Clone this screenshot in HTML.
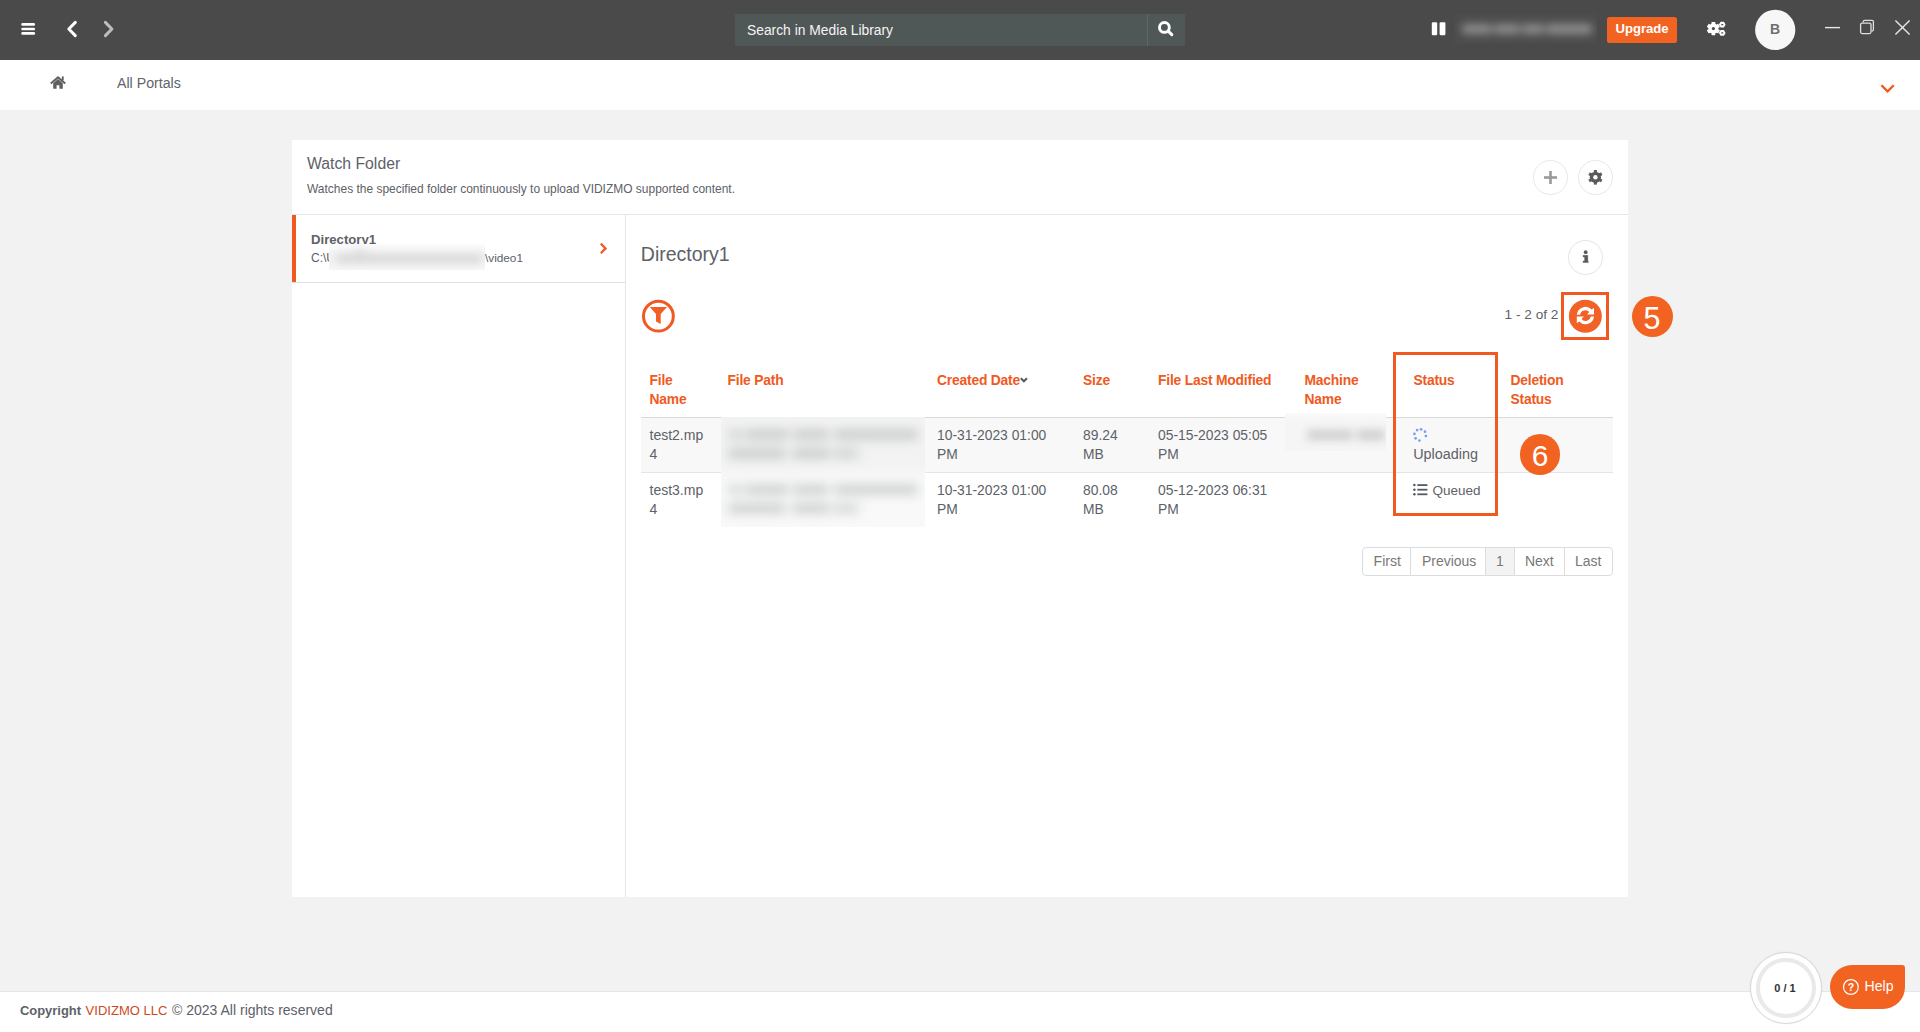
<!DOCTYPE html>
<html><head><meta charset="utf-8">
<style>
*{box-sizing:border-box;margin:0;padding:0}
html,body{width:1920px;height:1032px;overflow:hidden;background:#f2f2f2;font-family:"Liberation Sans",sans-serif;color:#5d6168}
.a{position:absolute;white-space:nowrap}
#top{position:absolute;left:0;top:0;width:1920px;height:60px;background:#4a4a4a}
#crumb{position:absolute;left:0;top:60px;width:1920px;height:50px;background:#fff}
#card{position:absolute;left:292px;top:140px;width:1336px;height:757px;background:#fff}
#footer{position:absolute;left:0;top:991px;width:1920px;height:41px;background:#fff;border-top:1px solid #e3e7ea}
.hdr{color:#f05a22;font-weight:700;font-size:13.85px;line-height:19.1px;letter-spacing:-0.2px}
.cell{color:#5d6168;font-size:14px;line-height:19px}
.blur{filter:blur(3px)}
.bar{position:absolute;background:#c8c8c8;border-radius:3px}
</style></head><body>
<div id="top">
<svg class="a" style="left:0;top:0" width="130" height="60" viewBox="0 0 130 60">
 <g stroke="#fff" stroke-width="2.6" stroke-linecap="round"><line x1="22.6" y1="24.4" x2="33.8" y2="24.4"/><line x1="22.6" y1="29" x2="33.8" y2="29"/><line x1="22.6" y1="33.4" x2="33.8" y2="33.4"/></g>
 <polyline points="75.3,22.4 68.8,29 75.3,35.6" fill="none" stroke="#fff" stroke-width="3" stroke-linecap="round" stroke-linejoin="round"/>
 <polyline points="105.4,22.4 111.9,29 105.4,35.6" fill="none" stroke="#bdbdbd" stroke-width="3" stroke-linecap="round" stroke-linejoin="round"/>
</svg>
<div class="a" style="left:735px;top:14px;width:450px;height:32px;background:#505857"></div>
<div class="a" style="left:1147px;top:14px;width:1px;height:32px;background:#5b6866"></div>
<div class="a" style="left:747px;top:20px;font-size:13.83px;line-height:20px;color:#f4f4f4">Search in Media Library</div>
<svg class="a" style="left:1150px;top:14px" width="35" height="32" viewBox="1150 14 35 32">
 <circle cx="1164.4" cy="27.4" r="4.9" fill="none" stroke="#fff" stroke-width="2.9"/>
 <line x1="1168.2" y1="31.2" x2="1171.8" y2="34.6" stroke="#fff" stroke-width="3" stroke-linecap="round"/>
</svg>
<svg class="a" style="left:1420px;top:0" width="500" height="60" viewBox="1420 0 500 60">
 <rect x="1431.8" y="22.2" width="5.4" height="13.1" rx="1.2" fill="#fff"/>
 <rect x="1439.6" y="22.2" width="5.8" height="13.1" rx="1.2" fill="#fff"/>
 <g transform="translate(1713.4,28.6)" fill="#fff">
  <circle r="5"/>
  <rect x="-1.9" y="-6.6" width="3.8" height="13.2" rx="0.6"/>
  <rect x="-1.9" y="-6.6" width="3.8" height="13.2" rx="0.6" transform="rotate(60)"/>
  <rect x="-1.9" y="-6.6" width="3.8" height="13.2" rx="0.6" transform="rotate(120)"/>
  <circle r="1.6" fill="#4a4a4a"/>
 </g>
 <g fill="#fff">
  <polygon points="1725.6,24.6 1723.9,27.5 1720.6,27.5 1718.9,24.6 1720.6,21.7 1723.9,21.7"/>
  <polygon points="1725.6,32.9 1723.9,35.8 1720.6,35.8 1718.9,32.9 1720.6,30 1723.9,30"/>
 </g>
 <g fill="#4a4a4a"><rect x="1721.2" y="24" width="2.2" height="1.3" rx="0.6"/><rect x="1721.2" y="32.3" width="2.2" height="1.3" rx="0.6"/></g>
 <circle cx="1775.2" cy="29.9" r="20.1" fill="#f7f7f7"/>
 <line x1="1825" y1="27.6" x2="1840" y2="27.6" stroke="#e6e6e6" stroke-width="1.4"/>
 <rect x="1860.6" y="23.2" width="10.4" height="10.4" rx="1.5" fill="none" stroke="#dedede" stroke-width="1.3"/>
 <path d="M1863.2,22.6 V21.5 a1.4,1.4 0 0 1 1.4,-1.2 H1872 a1.4,1.4 0 0 1 1.4,1.4 V29.6 a1.4,1.4 0 0 1 -1.4,1.4 H1871.6" fill="none" stroke="#dedede" stroke-width="1.3"/>
 <g stroke="#e8e8e8" stroke-width="1.4"><line x1="1895.4" y1="20.4" x2="1909.6" y2="34.4"/><line x1="1909.6" y1="20.4" x2="1895.4" y2="34.4"/></g>
</svg>
<div class="a" style="left:1454px;top:12.5px;width:143px;height:31px;background:#4c4c4c;overflow:hidden">
 <div class="a" style="left:-12px;top:-12px;width:167px;height:55px;filter:blur(4.5px)">
  <div class="a" style="left:0;top:0;width:167px;height:55px;background:#4c4c4c"></div>
  <div class="bar" style="left:20px;top:23.5px;width:30px;height:10px;background:#8c8c8c"></div>
  <div class="bar" style="left:52px;top:23.5px;width:26px;height:10px;background:#8c8c8c"></div>
  <div class="bar" style="left:80px;top:23.5px;width:22px;height:10px;background:#8c8c8c"></div>
  <div class="bar" style="left:104px;top:23.5px;width:46px;height:10px;background:#8e8e8e"></div>
 </div>
</div>
<div class="a" style="left:1607px;top:17px;width:70px;height:26px;background:#f26322;border-radius:2.5px"></div>
<div class="a" style="left:1607px;top:17.1px;width:70px;text-align:center;font-size:13.1px;font-weight:700;line-height:24px;color:#fff">Upgrade</div>
<div class="a" style="left:1755px;top:19.2px;width:40px;text-align:center;font-size:14px;font-weight:700;line-height:20px;color:#6e6e6e">B</div>
</div>
<div id="crumb">
<svg class="a" style="left:48px;top:14px" width="20" height="16" viewBox="48 74 20 16">
 <path d="M53.2,83.2 L58,79 L62.8,83.2 V88.8 H59.4 V85.2 H56.6 V88.8 H53.2 Z" fill="#5f5f5f"/>
 <polyline points="50.8,83.4 58,77.2 65.2,83.4" fill="none" stroke="#5f5f5f" stroke-width="2"/>
 <rect x="61.8" y="76.4" width="1.9" height="4" fill="#5f5f5f"/>
</svg>
<div class="a" style="left:117px;top:13px;font-size:14.18px;line-height:20px;color:#60646b">All Portals</div>
<svg class="a" style="left:1876px;top:20px" width="24" height="16" viewBox="1876 80 24 16">
 <polyline points="1881.4,85.2 1887.6,91.4 1893.8,85.2" fill="none" stroke="#f05a1a" stroke-width="2.3"/>
</svg>
</div>
<div id="card"></div>
<div class="a" style="left:307px;top:153.5px;font-size:15.77px;line-height:20px;color:#5d6168">Watch Folder</div>
<div class="a" style="left:307px;top:181.1px;font-size:11.97px;line-height:16px;color:#5d6168">Watches the specified folder continuously to upload VIDIZMO supported content.</div>
<div class="a" style="left:1533.2px;top:160.2px;width:34.6px;height:34.6px;border:1px solid #e6e8ea;border-radius:50%"></div>
<div class="a" style="left:1578px;top:160.2px;width:34.6px;height:34.6px;border:1px solid #e6e8ea;border-radius:50%"></div>
<svg class="a" style="left:1540px;top:165px" width="80" height="25" viewBox="1540 165 80 25">
 <g stroke="#9a9a9a" stroke-width="2.6"><line x1="1550.5" y1="171" x2="1550.5" y2="184"/><line x1="1544" y1="177.5" x2="1557" y2="177.5"/></g>
 <g transform="translate(1595.4,177.3)" fill="#5c5c5c">
  <circle r="5.6"/>
  <rect x="-1.5" y="-7.3" width="3" height="14.6"/>
  <rect x="-1.5" y="-7.3" width="3" height="14.6" transform="rotate(60)"/>
  <rect x="-1.5" y="-7.3" width="3" height="14.6" transform="rotate(120)"/>
  <circle r="2.2" fill="#fff"/>
 </g>
</svg>
<div class="a" style="left:292px;top:214px;width:1336px;height:1px;background:#e3e7ea"></div>
<div class="a" style="left:625px;top:215px;width:1px;height:682px;background:#e3e7ea"></div>
<div class="a" style="left:292px;top:282px;width:333px;height:1px;background:#dde3e8"></div>
<div class="a" style="left:292px;top:215px;width:4px;height:67px;background:#f05a22"></div>
<div class="a" style="left:311px;top:230.8px;font-size:13.17px;font-weight:700;line-height:18px;color:#5d6168">Directory1</div>
<div class="a" style="left:311px;top:249.8px;font-size:12px;line-height:16px;color:#5d6168">C:\U</div>
<div class="a" style="left:329px;top:244px;width:156px;height:26px;background:#f3f3f3;overflow:hidden">
 <div class="a" style="left:-12px;top:-12px;width:180px;height:50px;filter:blur(4px)">
  <div class="a" style="left:0;top:0;width:180px;height:16px;background:#fdfdfd"></div>
  <div class="a" style="left:0;top:36px;width:180px;height:14px;background:#f8f8f8"></div>
  <div class="bar" style="left:19px;top:22px;width:146px;height:9px;background:#d8d8d8"></div>
  <div class="bar" style="left:36px;top:16px;width:14px;height:6px;background:#e2e2e2"></div>
 </div>
</div>
<div class="a" style="left:485px;top:249.8px;font-size:11.78px;line-height:16px;color:#5d6168">\video1</div>
<svg class="a" style="left:596px;top:240px" width="14" height="16" viewBox="596 240 14 16">
 <polyline points="600.8,243.6 605.6,248.4 600.8,253.2" fill="none" stroke="#f05a22" stroke-width="2.2"/>
</svg>

<div class="a" style="left:640.8px;top:241.6px;font-size:19.5px;line-height:24px;color:#5d6168">Directory1</div>
<div class="a" style="left:1568px;top:240px;width:35px;height:35px;border:1px solid #e3e5e8;border-radius:50%"></div>
<svg class="a" style="left:1578px;top:246px" width="16" height="20" viewBox="1578 246 16 20">
 <circle cx="1585.7" cy="252.2" r="1.9" fill="#555a60"/>
 <path d="M1583.1,255.3 H1587.8 V260.9 H1588.2 V262.6 H1583.1 V260.9 H1584.6 V257 H1583.1 Z" fill="#555a60" stroke="#555a60" stroke-width="0.4" stroke-linejoin="round"/>
</svg>
<svg class="a" style="left:638px;top:296px" width="42" height="42" viewBox="638 296 42 42">
 <circle cx="658.4" cy="316.2" r="14.9" fill="none" stroke="#f05a22" stroke-width="3"/>
 <path d="M649.8,307 H667 L660.7,314 V323.9 L656,321.5 V314 Z" fill="#f15f24"/>
</svg>
<div class="a" style="left:1504.6px;top:306.1px;font-size:13.65px;line-height:18px;color:#5d6168">1 - 2 of 2</div>
<div class="a" style="left:1561px;top:292px;width:48px;height:48px;border:3px solid #f05a22"></div>
<svg class="a" style="left:1566px;top:297px" width="40" height="40" viewBox="1566 297 40 40">
 <circle cx="1585.35" cy="316.25" r="16.45" fill="#f26125"/>
 <g transform="translate(1585.4,315.6)" fill="#fff">
  <path id="rhalf" d="M-8.6,-0.9 A8.6,8.6 0 0 1 6.2,-6 L8.6,-7.6 V-1 H1.6 L3.9,-3.5 A5.3,5.3 0 0 0 -5.3,-0.9 Z"/>
  <path d="M-8.6,-0.9 A8.6,8.6 0 0 1 6.2,-6 L8.6,-7.6 V-1 H1.6 L3.9,-3.5 A5.3,5.3 0 0 0 -5.3,-0.9 Z" transform="rotate(180)"/>
 </g>
</svg>
<div class="a" style="left:1631.5px;top:295.8px;width:41px;height:41px;border-radius:50%;background:#f26322"></div>
<div class="a" style="left:1631.5px;top:300.6px;width:41px;text-align:center;font-size:30.5px;line-height:34px;color:#fff">5</div>


<div class="a hdr" style="left:649.5px;top:370.5px">File<br>Name</div>
<div class="a hdr" style="left:727.5px;top:370.5px">File Path</div>
<div class="a hdr" style="left:937px;top:370.5px">Created Date</div>
<svg class="a" style="left:1017px;top:374px" width="12" height="10" viewBox="1017 374 12 10">
 <polyline points="1020.8,378.2 1023.9,381.3 1027,378.2" fill="none" stroke="#555a60" stroke-width="2"/>
</svg>
<div class="a hdr" style="left:1083px;top:370.5px">Size</div>
<div class="a hdr" style="left:1158px;top:370.5px">File Last Modified</div>
<div class="a hdr" style="left:1304.5px;top:370.5px">Machine<br>Name</div>
<div class="a hdr" style="left:1413.5px;top:370.5px">Status</div>
<div class="a hdr" style="left:1510.5px;top:370.5px">Deletion<br>Status</div>
<div class="a" style="left:641px;top:417px;width:972px;height:1px;background:#d9d9d9"></div>
<div class="a" style="left:641px;top:418px;width:972px;height:54px;background:#f8f8f8"></div>
<div class="a" style="left:641px;top:472px;width:972px;height:1px;background:#e3e6e8"></div>

<div class="a cell" style="left:649.5px;top:425.6px">test2.mp<br>4</div>
<div class="a cell" style="left:937px;top:425.6px;font-size:13.85px">10-31-2023 01:00<br>PM</div>
<div class="a cell" style="left:1083px;top:425.6px;font-size:13.85px">89.24<br>MB</div>
<div class="a cell" style="left:1158px;top:425.6px;font-size:13.85px">05-15-2023 05:05<br>PM</div>
<div class="a cell" style="left:1413.2px;top:444.9px;font-size:14.39px">Uploading</div>

<div class="a cell" style="left:649.5px;top:481.1px">test3.mp<br>4</div>
<div class="a cell" style="left:937px;top:481.1px;font-size:13.85px">10-31-2023 01:00<br>PM</div>
<div class="a cell" style="left:1083px;top:481.1px;font-size:13.85px">80.08<br>MB</div>
<div class="a cell" style="left:1158px;top:481.1px;font-size:13.85px">05-12-2023 06:31<br>PM</div>
<div class="a cell" style="left:1432.5px;top:481.1px;font-size:13.49px">Queued</div>

<div class="a" style="left:721px;top:417px;width:204px;height:110px;background:#f9f9f9;overflow:hidden">
 <div class="a" style="left:-12px;top:-12px;width:228px;height:134px;filter:blur(5.5px)">
  <div class="a" style="left:0;top:0;width:228px;height:67px;background:#f2f2f2"></div>
  <div class="bar" style="left:19px;top:24px;width:14px;height:11px;background:#d4d7d7"></div>
  <div class="bar" style="left:36px;top:24px;width:44px;height:11px;background:#cccfcf"></div>
  <div class="bar" style="left:84px;top:24px;width:36px;height:11px;background:#cccfcf"></div>
  <div class="bar" style="left:125px;top:24px;width:84px;height:11px;background:#cccfcf"></div>
  <div class="bar" style="left:19px;top:43px;width:58px;height:11px;background:#cccfcf"></div>
  <div class="bar" style="left:83px;top:43px;width:38px;height:11px;background:#cccfcf"></div>
  <div class="bar" style="left:124px;top:43px;width:26px;height:11px;background:#d4d7d7"></div>
  <div class="bar" style="left:19px;top:79px;width:14px;height:11px;background:#d8dbdb"></div>
  <div class="bar" style="left:36px;top:79px;width:44px;height:11px;background:#d0d3d3"></div>
  <div class="bar" style="left:84px;top:79px;width:36px;height:11px;background:#d0d3d3"></div>
  <div class="bar" style="left:125px;top:79px;width:84px;height:11px;background:#d0d3d3"></div>
  <div class="bar" style="left:19px;top:98px;width:58px;height:11px;background:#d0d3d3"></div>
  <div class="bar" style="left:83px;top:98px;width:38px;height:11px;background:#d0d3d3"></div>
  <div class="bar" style="left:124px;top:98px;width:26px;height:11px;background:#d8dbdb"></div>
 </div>
</div>
<div class="a" style="left:1285px;top:413px;width:101px;height:38px;background:#f5f5f5;overflow:hidden">
 <div class="a" style="left:-12px;top:-12px;width:125px;height:62px;filter:blur(4.5px)">
  <div class="a" style="left:0;top:0;width:125px;height:16px;background:#fbfbfb"></div>
  <div class="bar" style="left:34px;top:29px;width:46px;height:10px;background:#cfcfcf"></div>
  <div class="bar" style="left:84px;top:29px;width:28px;height:10px;background:#cdcdcd"></div>
 </div>
</div>
<svg class="a" style="left:1410px;top:425px" width="20" height="20" viewBox="1410 425 20 20">
 <g fill="#7b9cf5"><circle cx="1421.1" cy="429.3" r="1.35"/><circle cx="1417.1" cy="430.1" r="1.35"/><circle cx="1425.0" cy="431.7" r="1.35"/><circle cx="1414.4" cy="433.9" r="1.35"/><circle cx="1425.9" cy="436.0" r="1.35"/><circle cx="1415.6" cy="438.3" r="1.35"/><circle cx="1419.4" cy="440.5" r="1.35"/></g>
</svg>
<svg class="a" style="left:1410px;top:480px" width="22" height="20" viewBox="1410 480 22 20">
 <g fill="#555a60">
  <circle cx="1414.4" cy="485.1" r="1.25"/><circle cx="1414.4" cy="489.7" r="1.25"/><circle cx="1414.4" cy="494.2" r="1.25"/>
  <rect x="1417.3" y="484.2" width="10.1" height="1.8"/><rect x="1417.3" y="488.8" width="10.1" height="1.8"/><rect x="1417.3" y="493.4" width="10.1" height="1.8"/>
 </g>
</svg>
<div class="a" style="left:1393px;top:352px;width:105px;height:164px;border:3px solid #f05a22"></div>
<div class="a" style="left:1519.6px;top:433.9px;width:40.8px;height:40.8px;border-radius:50%;background:#f26322"></div>
<div class="a" style="left:1519.6px;top:438.7px;width:40.8px;text-align:center;font-size:30px;line-height:34px;color:#fff">6</div>

<div class="a" style="left:1362px;top:547px;width:251px;height:29px;border:1px solid #dcdcdc;border-radius:4px;overflow:hidden">
 <div class="a" style="left:46.7px;top:0;width:1px;height:27px;background:#dcdcdc"></div>
 <div class="a" style="left:121.5px;top:0;width:1px;height:27px;background:#dcdcdc"></div>
 <div class="a" style="left:122.5px;top:0;width:28.2px;height:27px;background:#f3f3f3"></div>
 <div class="a" style="left:150.7px;top:0;width:1px;height:27px;background:#dcdcdc"></div>
 <div class="a" style="left:200.7px;top:0;width:1px;height:27px;background:#dcdcdc"></div>
</div>
<div class="a" style="left:1373.5px;top:551.8px;font-size:14.15px;line-height:19px;color:#787878">First</div>
<div class="a" style="left:1422px;top:551.8px;font-size:13.97px;line-height:19px;color:#787878">Previous</div>
<div class="a" style="left:1485px;top:551.8px;width:30px;text-align:center;font-size:13.97px;line-height:19px;color:#787878">1</div>
<div class="a" style="left:1525px;top:551.8px;font-size:13.97px;line-height:19px;color:#787878">Next</div>
<div class="a" style="left:1575px;top:551.8px;font-size:13.97px;line-height:19px;color:#787878">Last</div>
<div id="footer"></div>
<div class="a" style="left:20px;top:1001.4px;font-size:12.93px;font-weight:700;line-height:19px;color:#5d6168">Copyright</div><div class="a" style="left:85.6px;top:1001.4px;font-size:13.06px;line-height:19px;color:#cc4a1d">VIDIZMO LLC</div><div class="a" style="left:172px;top:1001.4px;font-size:14.02px;line-height:19px;color:#5d6168">© 2023 All rights reserved</div>
<div class="a" style="left:1749.8px;top:951.8px;width:72.5px;height:72.5px;border-radius:50%;background:#fff;border:1px solid #d5d9dc;box-shadow:0 0 2px rgba(0,0,0,0.08)"></div>
<div class="a" style="left:1756.2px;top:958.2px;width:59.7px;height:59.7px;border-radius:50%;border:4.7px solid #e9e9e9"></div>
<div class="a" style="left:1749px;top:980.3px;width:72px;text-align:center;font-size:11px;font-weight:700;line-height:16px;color:#333">0 / 1</div>
<div class="a" style="left:1830px;top:965px;width:75px;height:44px;background:#f26322;border-radius:22px 3px 22px 22px"></div>
<svg class="a" style="left:1840px;top:977px" width="22" height="20" viewBox="1840 977 22 20">
 <circle cx="1850.9" cy="987" r="7.4" fill="none" stroke="#fff" stroke-width="1.2"/>
 <text x="1850.9" y="991" text-anchor="middle" font-family="Liberation Sans" font-size="10.5" font-weight="700" fill="#fff">?</text>
</svg>
<div class="a" style="left:1864.5px;top:977.4px;font-size:14.1px;line-height:19px;color:#fff">Help</div>

</body></html>
